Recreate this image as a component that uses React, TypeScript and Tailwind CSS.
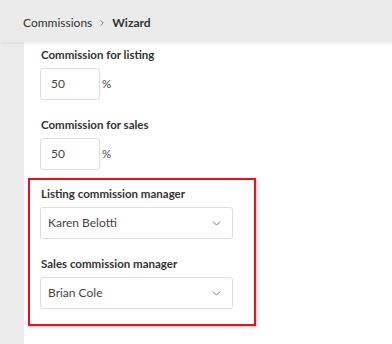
import React from "react";
import { ChevronDown, ChevronRight } from "lucide-react";

function PercentField({ label, value }: { label: string; value: string }) {
    return (
        <div className="flex flex-col">
            <label className="text-[11.5px] font-bold leading-[18px] text-[#333] ml-[1px]">{label}</label>
            <div className="mt-[4px] flex items-center">
                <div className="w-[60px] h-[32px] border border-[#dedede] rounded-[3px] bg-white flex items-center pl-[10px] text-[12px] text-[#444]">
                    {value}
                </div>
                <span className="ml-[2px] text-[11.5px] text-[#444]">%</span>
            </div>
        </div>
    );
}

function SelectField({ label, value }: { label: string; value: string }) {
    return (
        <div className="flex flex-col">
            <label className="text-[11.5px] font-bold leading-[18px] text-[#333] ml-[1px]">{label}</label>
            <div className="mt-[4px] w-[193px] h-[32px] border border-[#dedede] rounded-[3px] bg-white flex items-center justify-between pl-[7px] pr-[9px] text-[12px] text-[#444]">
                <span>{value}</span>
                <ChevronDown size={13} strokeWidth={1.5} className="text-[#555]" />
            </div>
        </div>
    );
}

export default function App() {
    return (
        <div className="w-[392px] h-[344px] overflow-hidden bg-white font-['Lato',sans-serif] flex flex-col">
            {/* Breadcrumb header */}
            <div className="h-[42px] shrink-0 bg-[#ebebeb] shadow-[0_2px_3px_rgba(0,0,0,0.06)] flex items-center pl-[23px] pt-[4px] text-[12px] text-[#333] relative z-10">
                <span>Commissions</span>
                <ChevronRight size={10} strokeWidth={1.75} className="mx-[5px] text-[#555]" />
                <span className="font-bold">Wizard</span>
            </div>

            <div className="flex flex-1">
                <div className="w-[24px] bg-[#ececec]" />
                <div className="flex-1 pl-[16px] pt-[4px] flex flex-col">
                    <PercentField label="Commission for listing" value="50" />
                    <div className="mt-[16px]">
                        <PercentField label="Commission for sales" value="50" />
                    </div>

                    {/* Highlighted managers section */}
                    <div className="mt-[8px] -ml-[12px] w-[228px] border-2 border-[#e8121c] shadow-[1px_1px_2px_rgba(0,0,0,0.25)] pl-[10px] pt-[5px] pb-[15px] flex flex-col gap-[16px]">
                        <SelectField label="Listing commission manager" value="Karen Belotti" />
                        <SelectField label="Sales commission manager" value="Brian Cole" />
                    </div>
                </div>
            </div>
        </div>
    );
}
